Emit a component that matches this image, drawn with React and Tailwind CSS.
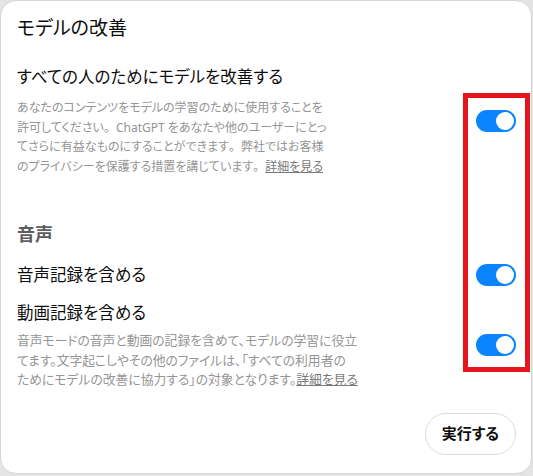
import React from 'react';

const font = { fontFamily: '"Noto Sans", "Noto Sans CJK JP", sans-serif' };

const Toggle = () => (
  <div className="w-[40px] h-[22px] rounded-full bg-[#0a84ff] flex items-center justify-end p-[2px] shrink-0">
    <div className="w-[18px] h-[18px] rounded-full bg-white" />
  </div>
);

const LearnMore = () => (
  <a href="#" className="underline text-[#7a7a7a]">詳細を見る</a>
);

// full-width period (palt would squeeze it)
const Kuten = () => <span className="[font-feature-settings:normal]">。</span>;

const App = () => {
  return (
    <div className="w-[533px] h-[476px] bg-[#e4e4e4] relative overflow-hidden" style={font}>
      <div className="w-[532px] h-[474px] bg-white rounded-2xl border border-[#d6d6d6] pl-[16px] pr-[15px] pt-[15px] [font-feature-settings:'palt']">
        <h2 className="text-[19px] leading-[24px] text-[#0d0d0d]">モデルの改善</h2>

        <div className="mt-[25px] flex items-center justify-between">
          <div>
            <p className="text-[16.5px] leading-[24px] text-[#0d0d0d]">すべての人のためにモデルを改善する</p>
            <p className="mt-[9px] text-[12px] leading-[19.5px] text-[#959595]">
              あなたのコンテンツをモデルの学習のために使用することを<br />
              許可してください<Kuten />ChatGPT をあなたや他のユーザーにとっ<br />
              てさらに有益なものにすることができます<Kuten />弊社ではお客様<br />
              のプライバシーを保護する措置を講じています<Kuten /><LearnMore />
            </p>
          </div>
          <Toggle />
        </div>

        <h3 className="mt-[46px] text-[18px] leading-[24px] font-bold text-[#5d5d5d]">音声</h3>

        <div className="mt-[17px] flex items-center justify-between">
          <p className="text-[16.5px] leading-[24px] text-[#0d0d0d]">音声記録を含める</p>
          <Toggle />
        </div>

        <div className="mt-[14px] flex items-center justify-between">
          <div>
            <p className="text-[16.5px] leading-[24px] text-[#0d0d0d]">動画記録を含める</p>
            <p className="mt-[6px] text-[12.8px] leading-[19.5px] text-[#959595]">
              音声モードの音声と動画の記録を含めて、モデルの学習に役立<br />
              てます。文字起こしやその他のファイルは、「すべての利用者の<br />
              ためにモデルの改善に協力する」の対象となります。<LearnMore />
            </p>
          </div>
          <Toggle />
        </div>

        <div className="mt-[23px] flex justify-end">
          <button className="h-[42px] px-[16px] rounded-full border border-[#dcdcdc] text-[15px] font-bold text-[#0d0d0d]">
            実行する
          </button>
        </div>
      </div>

      <div className="absolute left-[463px] top-[93px] w-[67px] h-[279px] border-[5px] border-[#e8141c]" />
    </div>
  );
};

export default App;
